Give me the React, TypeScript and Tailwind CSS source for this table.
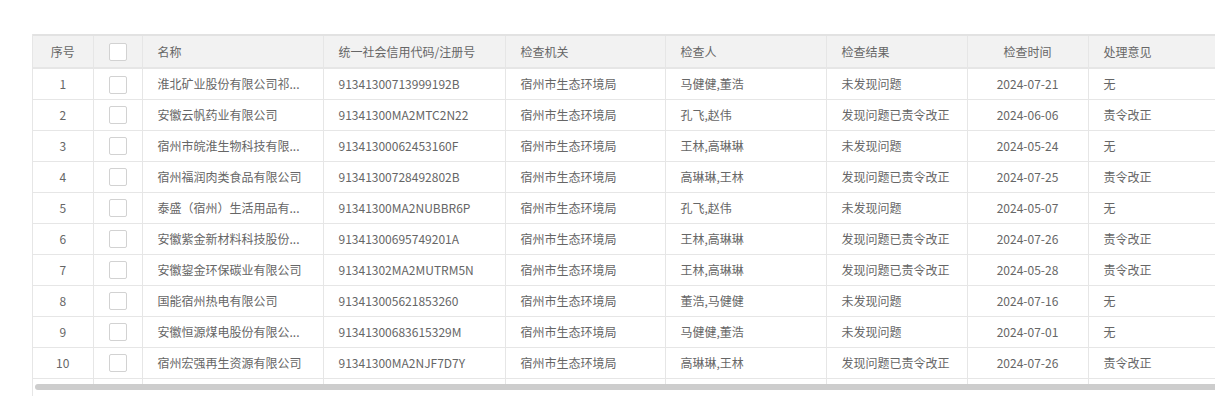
import React from 'react';

const rows = [
  { id: 1, name: '淮北矿业股份有限公司祁...', code: '91341300713999192B', org: '宿州市生态环境局', people: '马健健,董浩', result: '未发现问题', date: '2024-07-21', advice: '无' },
  { id: 2, name: '安徽云帆药业有限公司', code: '91341300MA2MTC2N22', org: '宿州市生态环境局', people: '孔飞,赵伟', result: '发现问题已责令改正', date: '2024-06-06', advice: '责令改正' },
  { id: 3, name: '宿州市皖淮生物科技有限...', code: '91341300062453160F', org: '宿州市生态环境局', people: '王林,高琳琳', result: '未发现问题', date: '2024-05-24', advice: '无' },
  { id: 4, name: '宿州福润肉类食品有限公司', code: '91341300728492802B', org: '宿州市生态环境局', people: '高琳琳,王林', result: '发现问题已责令改正', date: '2024-07-25', advice: '责令改正' },
  { id: 5, name: '泰盛（宿州）生活用品有...', code: '91341300MA2NUBBR6P', org: '宿州市生态环境局', people: '孔飞,赵伟', result: '未发现问题', date: '2024-05-07', advice: '无' },
  { id: 6, name: '安徽紫金新材料科技股份...', code: '91341300695749201A', org: '宿州市生态环境局', people: '王林,高琳琳', result: '发现问题已责令改正', date: '2024-07-26', advice: '责令改正' },
  { id: 7, name: '安徽鋆金环保碳业有限公司', code: '91341302MA2MUTRM5N', org: '宿州市生态环境局', people: '王林,高琳琳', result: '发现问题已责令改正', date: '2024-05-28', advice: '责令改正' },
  { id: 8, name: '国能宿州热电有限公司', code: '913413005621853260', org: '宿州市生态环境局', people: '董浩,马健健', result: '未发现问题', date: '2024-07-16', advice: '无' },
  { id: 9, name: '安徽恒源煤电股份有限公...', code: '91341300683615329M', org: '宿州市生态环境局', people: '马健健,董浩', result: '未发现问题', date: '2024-07-01', advice: '无' },
  { id: 10, name: '宿州宏强再生资源有限公司', code: '91341300MA2NJF7D7Y', org: '宿州市生态环境局', people: '高琳琳,王林', result: '发现问题已责令改正', date: '2024-07-26', advice: '责令改正' },
];

function Checkbox() {
  return <span className="inline-block w-[18px] h-[18px] border border-[#d2d2d2] rounded-[2px] bg-white align-middle" />;
}

const cell = 'border-r border-[#e6e6e6] px-[15px] whitespace-nowrap overflow-hidden';

export default function App() {
  return (
    <div
      className="h-[396px] bg-white pt-[34px] pl-[32px] overflow-hidden text-[12px] text-[#666]"
      style={{ fontFamily: '"Noto Sans CJK SC", "Noto Sans", sans-serif' }}
    >
      <div className="h-full border-l border-[#e6e6e6] overflow-hidden">
        <table className="table-fixed border-collapse w-[1340px]">
          <colgroup>
            <col className="w-[60px]" />
            <col className="w-[49px]" />
            <col className="w-[181px]" />
            <col className="w-[182px]" />
            <col className="w-[160px]" />
            <col className="w-[161px]" />
            <col className="w-[141px]" />
            <col className="w-[121px]" />
            <col className="w-[285px]" />
          </colgroup>
          <thead>
            <tr className="h-[33px] bg-[#f2f2f2] border-t-2 border-t-[#e2e2e2] border-b-2 border-b-[#e6e6e6]">
              <th className={`${cell} font-normal text-center`}>序号</th>
              <th className={`${cell} font-normal text-center px-0`}><Checkbox /></th>
              <th className={`${cell} font-normal text-left`}>名称</th>
              <th className={`${cell} font-normal text-left`}>统一社会信用代码/注册号</th>
              <th className={`${cell} font-normal text-left`}>检查机关</th>
              <th className={`${cell} font-normal text-left`}>检查人</th>
              <th className={`${cell} font-normal text-left`}>检查结果</th>
              <th className={`${cell} font-normal text-center`}>检查时间</th>
              <th className={`${cell} font-normal text-left`}>处理意见</th>
            </tr>
          </thead>
          <tbody>
            {rows.map((r) => (
              <tr key={r.id} className="h-[31px] border-b border-[#e6e6e6]">
                <td className={`${cell} text-center`}>{r.id}</td>
                <td className={`${cell} text-center px-0`}><Checkbox /></td>
                <td className={cell}>{r.name}</td>
                <td className={cell}>{r.code}</td>
                <td className={cell}>{r.org}</td>
                <td className={cell}>{r.people}</td>
                <td className={cell}>{r.result}</td>
                <td className={`${cell} text-center`}>{r.date}</td>
                <td className={cell}>{r.advice}</td>
              </tr>
            ))}
            <tr className="h-[6px]">
              {Array.from({ length: 9 }).map((_, i) => (
                <td key={i} className="border-r border-[#e6e6e6] p-0" />
              ))}
            </tr>
          </tbody>
        </table>
        <div className="h-[7px] pl-[2px]">
          <div className="h-[6px] rounded-l-full bg-[#cdcdcd]" />
        </div>
      </div>
    </div>
  );
}
